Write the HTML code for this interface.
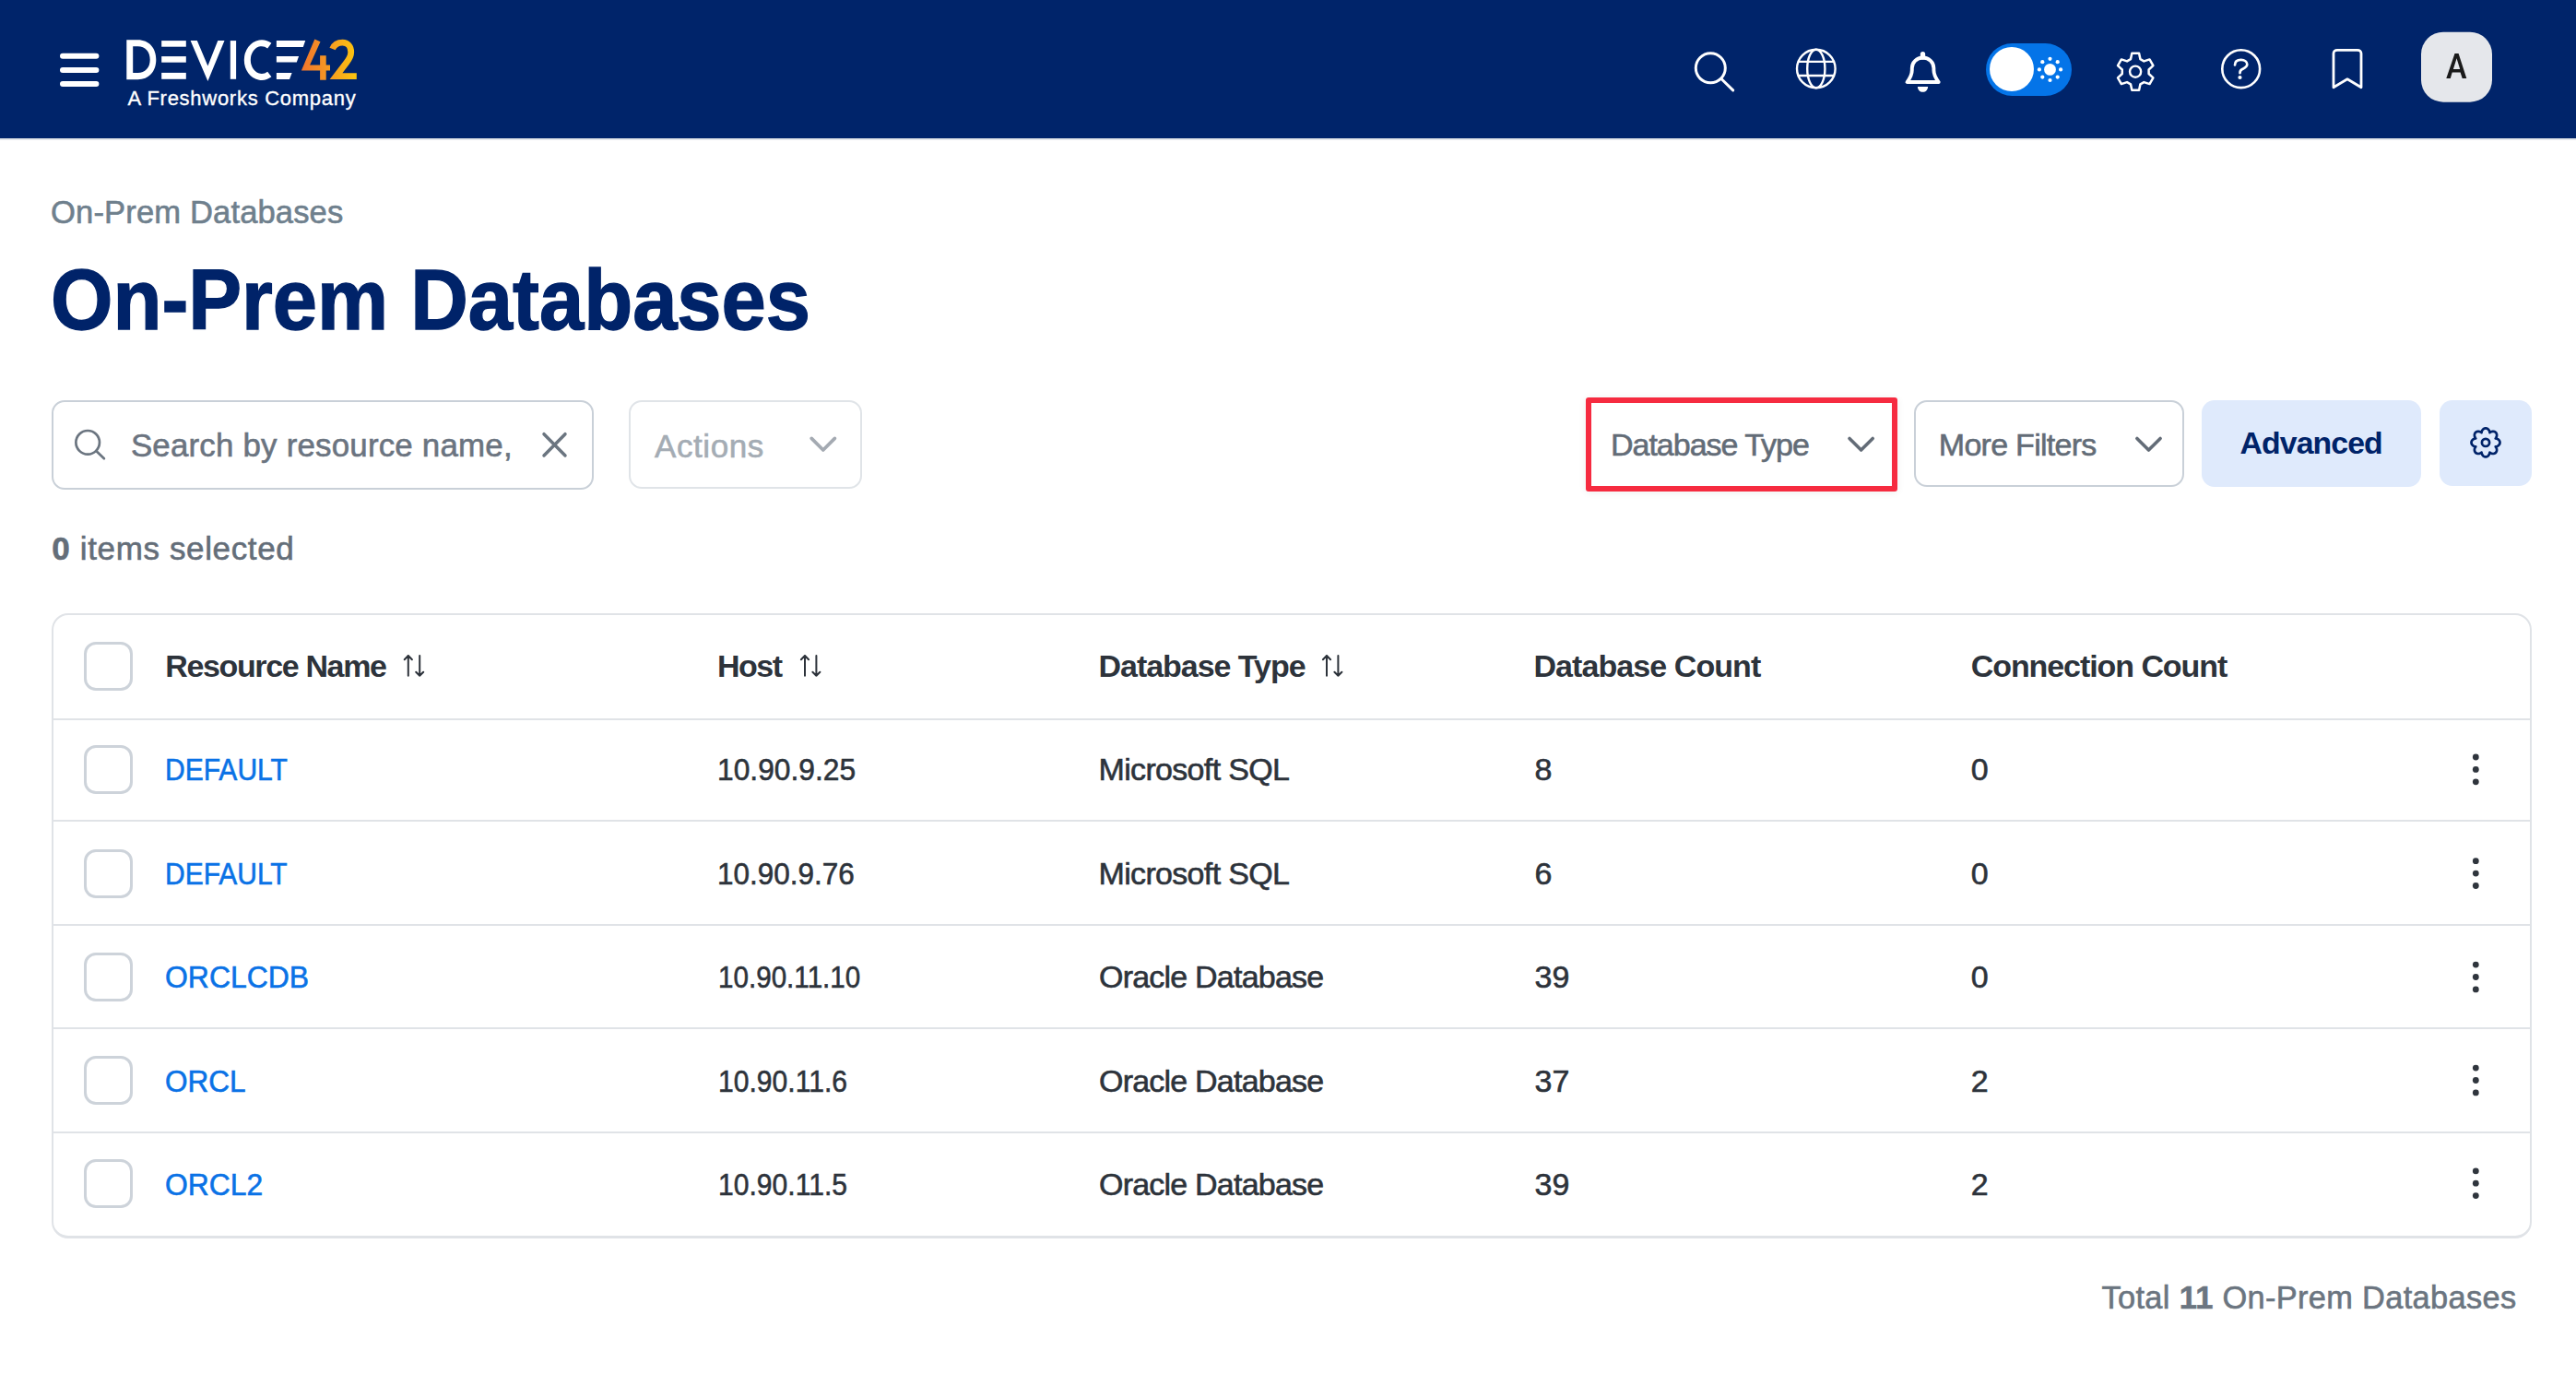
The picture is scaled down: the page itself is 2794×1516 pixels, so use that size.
<!DOCTYPE html>
<html><head><meta charset="utf-8">
<style>
*{box-sizing:border-box;margin:0;padding:0}
html,body{width:2794px;height:1516px;overflow:hidden;background:#fff;font-family:"Liberation Sans",sans-serif}
.a{position:absolute}
.t{position:absolute;line-height:1;white-space:nowrap}
svg{position:absolute;overflow:visible;left:0;top:0}
#hdr{position:absolute;left:0;top:0;width:2794px;height:150px;background:#00246a}
#hdrline{position:absolute;left:0;top:150px;width:2794px;height:2px;background:#e3e6ea}
.box{position:absolute;border-radius:14px;background:#fff}
.cb{position:absolute;left:91px;width:53px;height:53px;border:3.6px solid #cdd3da;border-radius:13px}
.hl{position:absolute;left:56px;width:2690px;height:2px;background:#e0e3e7}
.hd{font-size:34px;font-weight:700;color:#2d333b;top:705px;letter-spacing:-1.2px}
.c{font-size:34px;color:#2d333b}
.lk{font-size:34px;color:#0a72e6}
.dots{position:absolute;left:2681.5px;width:7.4px;height:7.4px;border-radius:50%;background:#2d333b}
</style></head><body>
<div id="hdr"></div>
<div id="hdrline"></div>

<svg width="2794" height="150">
  <g stroke="#fff" stroke-width="6" stroke-linecap="round">
    <line x1="68" y1="60.8" x2="104.4" y2="60.8"/>
    <line x1="68" y1="75.9" x2="104.4" y2="75.9"/>
    <line x1="68" y1="91" x2="104.4" y2="91"/>
  </g>
  <defs>
    <linearGradient id="g42" x1="326" y1="0" x2="387" y2="0" gradientUnits="userSpaceOnUse">
      <stop offset="0" stop-color="#f0732d"/>
      <stop offset="0.5" stop-color="#f69a22"/>
      <stop offset="1" stop-color="#fcc60f"/>
    </linearGradient>
  </defs>
  <path fill="#fff" fill-rule="evenodd" d="M137.3,43.3 H149.5 C161.5,43.3 169.3,52 169.3,64.75 C169.3,77.5 161.5,86.2 149.5,86.2 H137.3 Z M144.2,50.2 H149.5 C157.5,50.2 162.7,56 162.7,64.75 C162.7,73.5 157.5,78.9 149.5,78.9 H144.2 Z"/>
  <rect x="175.2" y="44.1" width="26.6" height="6.6" fill="#fff"/>
  <rect x="175.2" y="61.1" width="26.6" height="6.6" fill="#fff"/>
  <rect x="175.2" y="78.9" width="26.6" height="6.9" fill="#fff"/>
  <polygon fill="#fff" points="206.6,44.1 213.8,44.1 225.4,71.6 236.3,44.1 243.5,44.1 225.4,88.1"/>
  <rect x="249.8" y="44.1" width="6.3" height="41.7" fill="#fff"/>
  <path fill="none" stroke="#fff" stroke-width="7" d="M292.3,49.6 A15.55,18.4 0 1 0 292.3,80.5"/>
  <polygon fill="#fff" points="299.9,44 331.2,44 328.8,50.9 299.9,50.9"/>
  <polygon fill="#fff" points="299.9,61 324.1,61 321.8,67.6 299.9,67.6"/>
  <polygon fill="#fff" points="299.9,79 316.6,79 314,85.9 299.9,85.9"/>
  <polygon fill="url(#g42)" points="341.3,42.5 347.5,45.2 336.1,70.6 347.1,70.6 347.1,60.3 353.7,60.3 353.7,70.6 358,70.6 358,76.6 353.7,76.6 353.7,86.7 347.1,86.7 347.1,76.6 326.9,76.6"/>
  <path fill="none" stroke="url(#g42)" stroke-width="6.8" stroke-linejoin="miter" d="M360.6,53 C362.5,48.5 366.5,46.1 371.5,46.1 C377,46.1 380.7,50.5 380.7,56.5 C380.7,61 378.8,64 375.8,67.8 L364.5,82.65 H386.8"/>

  <g fill="none" stroke="#fff" stroke-width="3" stroke-linecap="round" stroke-linejoin="round">
    <circle cx="1855.3" cy="73.8" r="16"/>
    <line x1="1867" y1="85.5" x2="1879.7" y2="97.9"/>
    <g stroke-width="2.4">
      <circle cx="1969.8" cy="74.5" r="20.8"/>
      <ellipse cx="1969.8" cy="74.5" rx="9.6" ry="20.8"/>
      <line x1="1951" y1="66.9" x2="1988.6" y2="66.9"/>
      <line x1="1951" y1="82" x2="1988.6" y2="82"/>
    </g>
    <path stroke-width="3.9" d="M2085.6,62.5 C2079,62.5 2073.8,67.5 2073.8,74 V76 C2073.8,81 2071.5,85 2068.5,89.05 H2102.7 C2099.7,85 2097.4,81 2097.4,76 V74 C2097.4,67.5 2092.2,62.5 2085.6,62.5 Z"/>
    <path stroke-width="5.3" d="M2085.5,58.6 V62"/>
    <path stroke-width="2.5" d="M2312.33,57.82 L2320.07,57.82 L2321.43,64.12 L2325.39,66.40 L2331.52,64.43 L2335.39,71.14 L2330.62,75.47 L2330.62,80.03 L2335.39,84.36 L2331.52,91.07 L2325.39,89.10 L2321.43,91.38 L2320.07,97.68 L2312.33,97.68 L2310.97,91.38 L2307.01,89.10 L2300.88,91.07 L2297.01,84.36 L2301.78,80.03 L2301.78,75.47 L2297.01,71.14 L2300.88,64.43 L2307.01,66.40 L2310.97,64.12 Z"/>
    <circle cx="2316.1" cy="77.7" r="6.05" stroke-width="2.4"/>
    <circle cx="2430.7" cy="74.7" r="20.4" stroke-width="2.6"/>
    <path stroke-width="2.7" d="M2424,70.5 C2424,66.5 2427,64.9 2430.7,64.9 C2434.5,64.9 2437.3,66.8 2437.3,69.8 C2437.3,72.8 2434.5,73.8 2432,75 C2430.3,75.8 2429.5,77 2429.5,79.2"/>
    <path stroke-width="2.8" d="M2531,94.8 V58 C2531,55.8 2532.8,54.3 2535,54.3 H2557 C2559.2,54.3 2561,55.8 2561,58 V94.8 L2546,85.8 Z"/>
  </g>
  <path fill="#fff" d="M2079.9,93.9 H2091.1 C2091.1,97.3 2088.6,99.8 2085.5,99.8 C2082.4,99.8 2079.9,97.3 2079.9,93.9 Z"/>
  <circle cx="2429.5" cy="84" r="2.1" fill="#fff"/>
  <rect x="2154" y="47" width="93" height="57" rx="28.5" fill="#0474e8"/>
  <circle cx="2182" cy="75" r="24" fill="#fff"/>
  <circle cx="2223.5" cy="75.4" r="6.4" fill="#fff"/>
  <g fill="#fff">
    <circle cx="2223.5" cy="63.8" r="2.1"/><circle cx="2223.5" cy="87" r="2.1"/>
    <circle cx="2211.9" cy="75.4" r="2.1"/><circle cx="2235.1" cy="75.4" r="2.1"/>
    <circle cx="2215.3" cy="67.2" r="2.1"/><circle cx="2231.7" cy="67.2" r="2.1"/>
    <circle cx="2215.3" cy="83.6" r="2.1"/><circle cx="2231.7" cy="83.6" r="2.1"/>
  </g>
  <rect x="2626" y="34.7" width="77" height="76" rx="24" fill="#e5e7eb"/>
  <path fill="#1a1a1a" fill-rule="evenodd" d="M2653.3,85 L2662.5,58 H2666.6 L2675.3,85 H2670.7 L2668.6,78.6 H2659.7 L2657.8,85 Z M2660.9,75.1 L2664.55,63.2 L2668.2,75.1 Z"/>
</svg>


<div class="box" style="left:56px;top:434px;width:588px;height:97px;border:2px solid #c9d0d8"></div>
<div class="box" style="left:682px;top:434px;width:253px;height:96px;border:2px solid #e0e4e8"></div>
<div class="a" style="left:1719.8px;top:431.2px;width:338px;height:102.3px;border:6px solid #f62b40;border-radius:3px;box-shadow:0 1px 8px rgba(0,0,0,0.07)"></div>
<div class="box" style="left:2076px;top:434px;width:293px;height:94px;border:2px solid #c9d0d8"></div>
<div class="box" style="left:2388px;top:434px;width:238px;height:94px;background:#dfeafc"></div>
<div class="box" style="left:2646px;top:434px;width:100px;height:93px;background:#dfeafc"></div>

<svg width="2794" height="1516">
  <g fill="none" stroke-linecap="round" stroke-linejoin="round">
    <circle cx="95.15" cy="479.8" r="12.8" stroke="#6b7580" stroke-width="2.7"/>
    <line x1="104.3" y1="489" x2="112.9" y2="497.3" stroke="#6b7580" stroke-width="2.7"/>
    <path d="M590,470.7 L613,493.9 M613,470.7 L590,493.9" stroke="#6b7580" stroke-width="3.5"/>
    <path d="M880.1999999999999,475.4 L892.8,488 L905.4,475.4" stroke="#a4aab2" stroke-width="3.7"/>
    <path d="M2006.0,475.4 L2018.6,488 L2031.1999999999998,475.4" stroke="#636c77" stroke-width="3.6"/>
    <path d="M2317.9,475.4 L2330.5,488 L2343.1,475.4" stroke="#636c77" stroke-width="3.6"/>
    <path d="M2696.00,464.40 L2696.61,464.45 L2697.20,464.60 L2697.78,464.85 L2698.33,465.19 L2698.84,465.62 L2699.30,466.14 L2699.71,466.74 L2700.06,467.42 L2700.32,468.19 L2700.44,469.18 L2701.23,468.56 L2701.96,468.21 L2702.68,467.97 L2703.39,467.84 L2704.09,467.80 L2704.75,467.85 L2705.38,468.00 L2705.97,468.23 L2706.50,468.55 L2706.96,468.94 L2707.35,469.40 L2707.67,469.93 L2707.90,470.52 L2708.05,471.15 L2708.10,471.81 L2708.06,472.51 L2707.93,473.22 L2707.69,473.94 L2707.34,474.67 L2706.72,475.46 L2707.71,475.58 L2708.48,475.84 L2709.16,476.19 L2709.76,476.60 L2710.28,477.06 L2710.71,477.57 L2711.05,478.12 L2711.30,478.70 L2711.45,479.29 L2711.50,479.90 L2711.45,480.51 L2711.30,481.10 L2711.05,481.68 L2710.71,482.23 L2710.28,482.74 L2709.76,483.20 L2709.16,483.61 L2708.48,483.96 L2707.71,484.22 L2706.72,484.34 L2707.34,485.13 L2707.69,485.86 L2707.93,486.58 L2708.06,487.29 L2708.10,487.99 L2708.05,488.65 L2707.90,489.28 L2707.67,489.87 L2707.35,490.40 L2706.96,490.86 L2706.50,491.25 L2705.97,491.57 L2705.38,491.80 L2704.75,491.95 L2704.09,492.00 L2703.39,491.96 L2702.68,491.83 L2701.96,491.59 L2701.23,491.24 L2700.44,490.62 L2700.32,491.61 L2700.06,492.38 L2699.71,493.06 L2699.30,493.66 L2698.84,494.18 L2698.33,494.61 L2697.78,494.95 L2697.20,495.20 L2696.61,495.35 L2696.00,495.40 L2695.39,495.35 L2694.80,495.20 L2694.22,494.95 L2693.67,494.61 L2693.16,494.18 L2692.70,493.66 L2692.29,493.06 L2691.94,492.38 L2691.68,491.61 L2691.56,490.62 L2690.77,491.24 L2690.04,491.59 L2689.32,491.83 L2688.61,491.96 L2687.91,492.00 L2687.25,491.95 L2686.62,491.80 L2686.03,491.57 L2685.50,491.25 L2685.04,490.86 L2684.65,490.40 L2684.33,489.87 L2684.10,489.28 L2683.95,488.65 L2683.90,487.99 L2683.94,487.29 L2684.07,486.58 L2684.31,485.86 L2684.66,485.13 L2685.28,484.34 L2684.29,484.22 L2683.52,483.96 L2682.84,483.61 L2682.24,483.20 L2681.72,482.74 L2681.29,482.23 L2680.95,481.68 L2680.70,481.10 L2680.55,480.51 L2680.50,479.90 L2680.55,479.29 L2680.70,478.70 L2680.95,478.12 L2681.29,477.57 L2681.72,477.06 L2682.24,476.60 L2682.84,476.19 L2683.52,475.84 L2684.29,475.58 L2685.28,475.46 L2684.66,474.67 L2684.31,473.94 L2684.07,473.22 L2683.94,472.51 L2683.90,471.81 L2683.95,471.15 L2684.10,470.52 L2684.33,469.93 L2684.65,469.40 L2685.04,468.94 L2685.50,468.55 L2686.03,468.23 L2686.62,468.00 L2687.25,467.85 L2687.91,467.80 L2688.61,467.84 L2689.32,467.97 L2690.04,468.21 L2690.77,468.56 L2691.56,469.18 L2691.68,468.19 L2691.94,467.42 L2692.29,466.74 L2692.70,466.14 L2693.16,465.62 L2693.67,465.19 L2694.22,464.85 L2694.80,464.60 L2695.39,464.45 Z" stroke="#002369" stroke-width="2.7"/>
    <circle cx="2696" cy="479.9" r="4.1" stroke="#002369" stroke-width="2.7"/>
    <g stroke="#2d333b" stroke-width="2">
      <path d="M442.8,732.8 V711 M438.7,715.2 L442.8,711 L446.90000000000003,715.2 M455.2,711 V732.8 M451.2,728.7 L455.2,732.8 L459.2,728.7"/>
      <path d="M873,732.8 V711 M868.9,715.2 L873,711 L877.1,715.2 M885.4,711 V732.8 M881.4,728.7 L885.4,732.8 L889.4,728.7"/>
      <path d="M1439,732.8 V711 M1434.9,715.2 L1439,711 L1443.1,715.2 M1451.4,711 V732.8 M1447.4,728.7 L1451.4,732.8 L1455.4,728.7"/>
    </g>
  </g>
</svg>


<div class="a" style="left:56px;top:665px;width:2690px;height:678px;border:2px solid #e0e3e7;border-bottom-width:3px;border-radius:18px"></div>
<div class="hl" style="top:779px"></div>
<div class="hl" style="top:889px"></div>
<div class="hl" style="top:1002px"></div>
<div class="hl" style="top:1114px"></div>
<div class="hl" style="top:1227px"></div>

<div class="cb" style="top:696px"></div>
<div class="cb" style="top:808.3px"></div>
<div class="cb" style="top:921px"></div>
<div class="cb" style="top:1033.4px"></div>
<div class="cb" style="top:1145.4px"></div>
<div class="cb" style="top:1257.1px"></div>
<svg width="2794" height="1516"><g fill="#2f353d"><circle cx="2685.3" cy="821.0" r="3.4"/><circle cx="2685.3" cy="834.4" r="3.4"/><circle cx="2685.3" cy="847.8" r="3.4"/><circle cx="2685.3" cy="933.7" r="3.4"/><circle cx="2685.3" cy="947.1" r="3.4"/><circle cx="2685.3" cy="960.5" r="3.4"/><circle cx="2685.3" cy="1046.1" r="3.4"/><circle cx="2685.3" cy="1059.5" r="3.4"/><circle cx="2685.3" cy="1072.9" r="3.4"/><circle cx="2685.3" cy="1158.1" r="3.4"/><circle cx="2685.3" cy="1171.5" r="3.4"/><circle cx="2685.3" cy="1184.9" r="3.4"/><circle cx="2685.3" cy="1269.8" r="3.4"/><circle cx="2685.3" cy="1283.2" r="3.4"/><circle cx="2685.3" cy="1296.6" r="3.4"/></g></svg>
<div class="t" id="bc" style="left:55.10px;top:212.7px;font-size:34.6px;font-weight:400;color:#6f808d;letter-spacing:0.125px;-webkit-text-stroke:0.6px #6f808d">On-Prem Databases</div>
<div class="t" id="title" style="left:55.39px;top:279.0px;font-size:93px;font-weight:700;color:#002369;letter-spacing:0.000px;-webkit-text-stroke:1.4px #002369;transform:scaleX(0.9323);transform-origin:0 0">On-Prem Databases</div>
<div class="t" id="fw" style="left:138.40px;top:96.1px;font-size:22px;font-weight:400;color:#fff;letter-spacing:0.726px;-webkit-text-stroke:0.35px #fff">A Freshworks Company</div>
<div class="t" id="search" style="left:141.90px;top:465.5px;font-size:34.9px;font-weight:400;color:#6b7480;letter-spacing:0.196px;-webkit-text-stroke:0.6px #6b7480">Search by resource name,</div>
<div class="t" id="actions" style="left:710.00px;top:465.5px;font-size:35px;font-weight:400;color:#a4acb4;letter-spacing:0.583px;-webkit-text-stroke:0.6px #a4acb4">Actions</div>
<div class="t" id="dbt" style="left:1747.00px;top:465.1px;font-size:34px;font-weight:400;color:#636c77;letter-spacing:-1.017px;-webkit-text-stroke:0.6px #636c77">Database Type</div>
<div class="t" id="mf" style="left:2102.80px;top:465.1px;font-size:34px;font-weight:400;color:#636c77;letter-spacing:-0.718px;-webkit-text-stroke:0.6px #636c77">More Filters</div>
<div class="t" id="adv" style="left:2429.60px;top:464.2px;font-size:33.8px;font-weight:700;color:#002369;letter-spacing:-0.914px;">Advanced</div>
<div class="t" id="sel" style="left:56.30px;top:576.6px;font-size:35px;font-weight:400;color:#646e79;letter-spacing:0.633px;-webkit-text-stroke:0.6px #646e79"><b>0</b> items selected</div>
<div class="t" id="h_rn" style="left:179.30px;top:705px;font-size:34px;font-weight:700;color:#2d333b;letter-spacing:-1.367px;">Resource Name</div>
<div class="t" id="h_host" style="left:778.00px;top:705px;font-size:34px;font-weight:700;color:#2d333b;letter-spacing:-1.533px;">Host</div>
<div class="t" id="h_dbt" style="left:1191.50px;top:705px;font-size:34px;font-weight:700;color:#2d333b;letter-spacing:-1.033px;">Database Type</div>
<div class="t" id="h_dbc" style="left:1663.50px;top:705px;font-size:34px;font-weight:700;color:#2d333b;letter-spacing:-0.931px;">Database Count</div>
<div class="t" id="h_cc" style="left:2137.70px;top:705px;font-size:34px;font-weight:700;color:#2d333b;letter-spacing:-1.067px;">Connection Count</div>
<div class="t" id="total" style="left:2279.50px;top:1390px;font-size:34.4px;font-weight:400;color:#6b7580;letter-spacing:0.320px;-webkit-text-stroke:0.6px #6b7580">Total <b>11</b> On-Prem Databases</div>
<div class="t" id="n0" style="left:179.20px;top:817.0px;font-size:34px;font-weight:400;color:#0a72e6;letter-spacing:0.000px;-webkit-text-stroke:0.6px #0a72e6;transform:scaleX(0.8827);transform-origin:0 0">DEFAULT</div>
<div class="t" id="h0" style="left:778.00px;top:817.0px;font-size:34px;font-weight:400;color:#2d333b;letter-spacing:0.000px;-webkit-text-stroke:0.6px #2d333b;transform:scaleX(0.9340);transform-origin:0 0">10.90.9.25</div>
<div class="t" id="t0" style="left:1191.50px;top:817.0px;font-size:34px;font-weight:400;color:#2d333b;letter-spacing:-0.667px;-webkit-text-stroke:0.6px #2d333b">Microsoft SQL</div>
<div class="t" id="d0" style="left:1664.50px;top:817.0px;font-size:34px;font-weight:400;color:#2d333b;letter-spacing:0.000px;-webkit-text-stroke:0.6px #2d333b">8</div>
<div class="t" id="c0" style="left:2137.70px;top:817.0px;font-size:34px;font-weight:400;color:#2d333b;letter-spacing:0.000px;-webkit-text-stroke:0.6px #2d333b">0</div>
<div class="t" id="n1" style="left:179.21px;top:929.5px;font-size:34px;font-weight:400;color:#0a72e6;letter-spacing:0.000px;-webkit-text-stroke:0.6px #0a72e6;transform:scaleX(0.8813);transform-origin:0 0">DEFAULT</div>
<div class="t" id="h1" style="left:777.99px;top:929.5px;font-size:34px;font-weight:400;color:#2d333b;letter-spacing:0.000px;-webkit-text-stroke:0.6px #2d333b;transform:scaleX(0.9256);transform-origin:0 0">10.90.9.76</div>
<div class="t" id="t1" style="left:1191.50px;top:929.5px;font-size:34px;font-weight:400;color:#2d333b;letter-spacing:-0.667px;-webkit-text-stroke:0.6px #2d333b">Microsoft SQL</div>
<div class="t" id="d1" style="left:1664.50px;top:929.5px;font-size:34px;font-weight:400;color:#2d333b;letter-spacing:0.000px;-webkit-text-stroke:0.6px #2d333b">6</div>
<div class="t" id="c1" style="left:2137.70px;top:929.5px;font-size:34px;font-weight:400;color:#2d333b;letter-spacing:0.000px;-webkit-text-stroke:0.6px #2d333b">0</div>
<div class="t" id="n2" style="left:178.70px;top:1042.0px;font-size:34px;font-weight:400;color:#0a72e6;letter-spacing:0.000px;-webkit-text-stroke:0.6px #0a72e6;transform:scaleX(0.9388);transform-origin:0 0">ORCLCDB</div>
<div class="t" id="h2" style="left:779.00px;top:1042.0px;font-size:34px;font-weight:400;color:#2d333b;letter-spacing:0.000px;-webkit-text-stroke:0.6px #2d333b;transform:scaleX(0.8712);transform-origin:0 0">10.90.11.10</div>
<div class="t" id="t2" style="left:1192.00px;top:1042.0px;font-size:34px;font-weight:400;color:#2d333b;letter-spacing:-0.786px;-webkit-text-stroke:0.6px #2d333b">Oracle Database</div>
<div class="t" id="d2" style="left:1664.50px;top:1042.0px;font-size:34px;font-weight:400;color:#2d333b;letter-spacing:0.000px;-webkit-text-stroke:0.6px #2d333b">39</div>
<div class="t" id="c2" style="left:2137.70px;top:1042.0px;font-size:34px;font-weight:400;color:#2d333b;letter-spacing:0.000px;-webkit-text-stroke:0.6px #2d333b">0</div>
<div class="t" id="n3" style="left:178.71px;top:1154.5px;font-size:34px;font-weight:400;color:#0a72e6;letter-spacing:0.000px;-webkit-text-stroke:0.6px #0a72e6;transform:scaleX(0.9276);transform-origin:0 0">ORCL</div>
<div class="t" id="h3" style="left:779.00px;top:1154.5px;font-size:34px;font-weight:400;color:#2d333b;letter-spacing:0.000px;-webkit-text-stroke:0.6px #2d333b;transform:scaleX(0.8849);transform-origin:0 0">10.90.11.6</div>
<div class="t" id="t3" style="left:1192.00px;top:1154.5px;font-size:34px;font-weight:400;color:#2d333b;letter-spacing:-0.786px;-webkit-text-stroke:0.6px #2d333b">Oracle Database</div>
<div class="t" id="d3" style="left:1664.50px;top:1154.5px;font-size:34px;font-weight:400;color:#2d333b;letter-spacing:0.000px;-webkit-text-stroke:0.6px #2d333b">37</div>
<div class="t" id="c3" style="left:2137.70px;top:1154.5px;font-size:34px;font-weight:400;color:#2d333b;letter-spacing:0.000px;-webkit-text-stroke:0.6px #2d333b">2</div>
<div class="t" id="n4" style="left:178.70px;top:1267.0px;font-size:34px;font-weight:400;color:#0a72e6;letter-spacing:0.000px;-webkit-text-stroke:0.6px #0a72e6;transform:scaleX(0.9370);transform-origin:0 0">ORCL2</div>
<div class="t" id="h4" style="left:779.00px;top:1267.0px;font-size:34px;font-weight:400;color:#2d333b;letter-spacing:0.000px;-webkit-text-stroke:0.6px #2d333b;transform:scaleX(0.8849);transform-origin:0 0">10.90.11.5</div>
<div class="t" id="t4" style="left:1192.00px;top:1267.0px;font-size:34px;font-weight:400;color:#2d333b;letter-spacing:-0.786px;-webkit-text-stroke:0.6px #2d333b">Oracle Database</div>
<div class="t" id="d4" style="left:1664.50px;top:1267.0px;font-size:34px;font-weight:400;color:#2d333b;letter-spacing:0.000px;-webkit-text-stroke:0.6px #2d333b">39</div>
<div class="t" id="c4" style="left:2137.70px;top:1267.0px;font-size:34px;font-weight:400;color:#2d333b;letter-spacing:0.000px;-webkit-text-stroke:0.6px #2d333b">2</div>
</body></html>
